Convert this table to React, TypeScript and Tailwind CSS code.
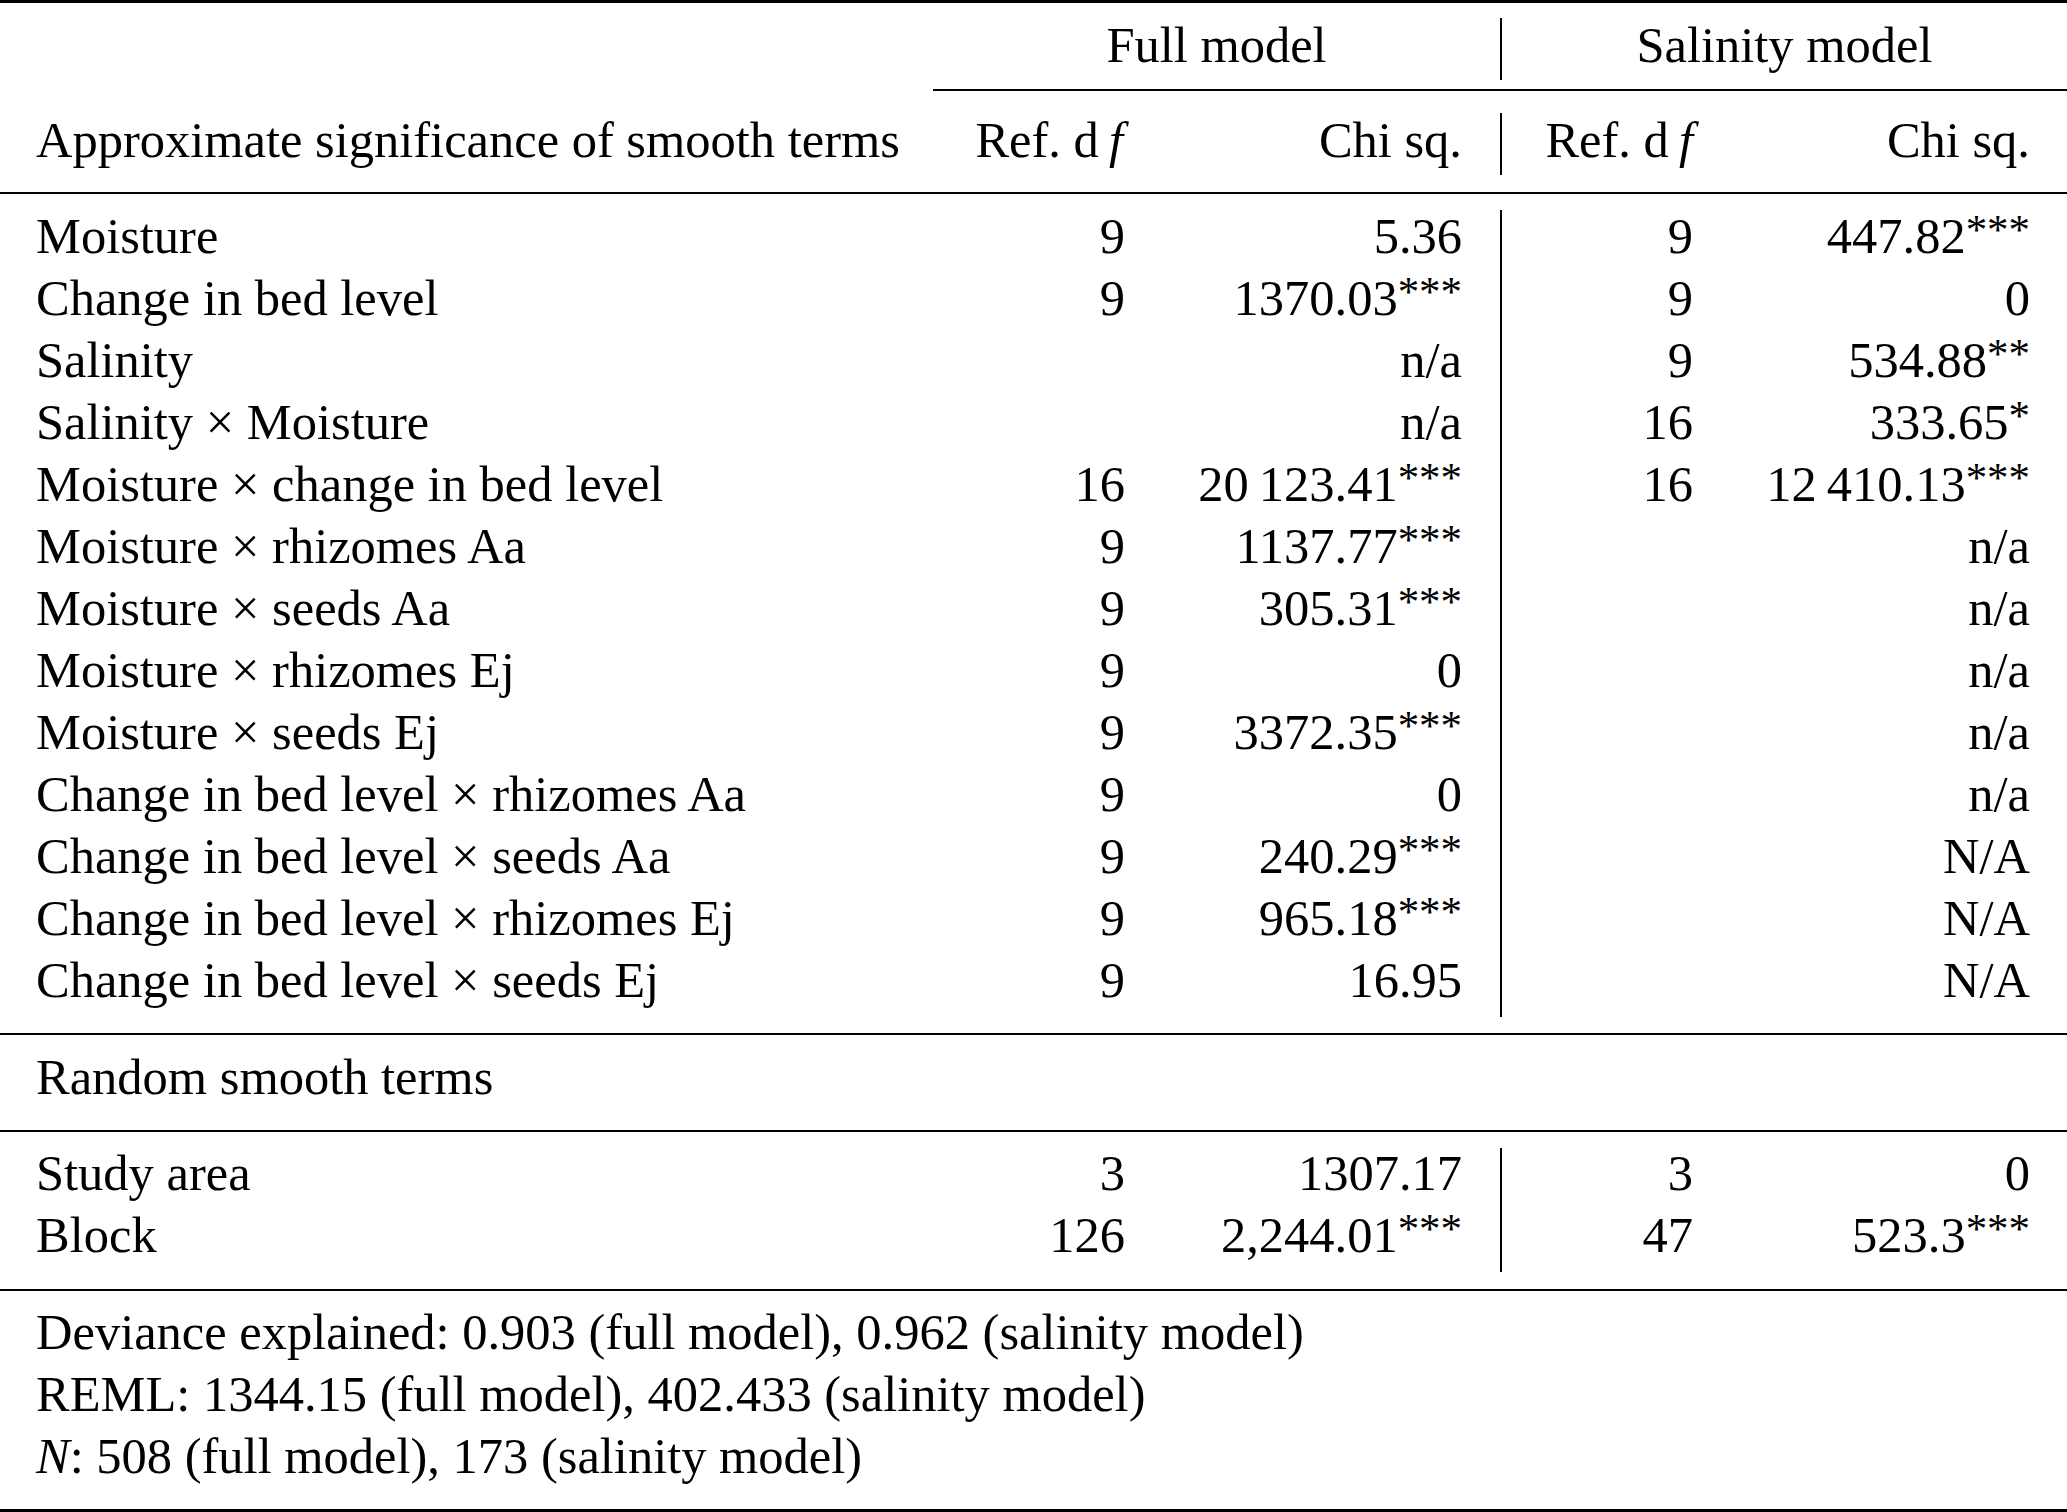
import React from 'react';

type Row = {
  label: string;
  df1: string;
  chi1: string;
  df2: string;
  chi2: string;
};

const smoothRows: Row[] = [
  { label: 'Moisture', df1: '9', chi1: '5.36', df2: '9', chi2: '447.82***' },
  { label: 'Change in bed level', df1: '9', chi1: '1370.03***', df2: '9', chi2: '0' },
  { label: 'Salinity', df1: '', chi1: 'n/a', df2: '9', chi2: '534.88**' },
  { label: 'Salinity × Moisture', df1: '', chi1: 'n/a', df2: '16', chi2: '333.65*' },
  { label: 'Moisture × change in bed level', df1: '16', chi1: '20\u2009123.41***', df2: '16', chi2: '12\u2009410.13***' },
  { label: 'Moisture × rhizomes Aa', df1: '9', chi1: '1137.77***', df2: '', chi2: 'n/a' },
  { label: 'Moisture × seeds Aa', df1: '9', chi1: '305.31***', df2: '', chi2: 'n/a' },
  { label: 'Moisture × rhizomes Ej', df1: '9', chi1: '0', df2: '', chi2: 'n/a' },
  { label: 'Moisture × seeds Ej', df1: '9', chi1: '3372.35***', df2: '', chi2: 'n/a' },
  { label: 'Change in bed level × rhizomes Aa', df1: '9', chi1: '0', df2: '', chi2: 'n/a' },
  { label: 'Change in bed level × seeds Aa', df1: '9', chi1: '240.29***', df2: '', chi2: 'N/A' },
  { label: 'Change in bed level × rhizomes Ej', df1: '9', chi1: '965.18***', df2: '', chi2: 'N/A' },
  { label: 'Change in bed level × seeds Ej', df1: '9', chi1: '16.95', df2: '', chi2: 'N/A' },
];

const randomRows: Row[] = [
  { label: 'Study area', df1: '3', chi1: '1307.17', df2: '3', chi2: '0' },
  { label: 'Block', df1: '126', chi1: '2,244.01***', df2: '47', chi2: '523.3***' },
];

// value with trailing significance stars set as superscript
const Chi = ({ v }: { v: string }) => {
  const m = v.match(/^(.*?)(\**)$/);
  const num = m ? m[1] : v;
  const stars = m ? m[2] : '';
  return (
    <>
      {num}
      {stars && <span className="relative top-[-9px] text-[0.85em] leading-none">{stars}</span>}
    </>
  );
};

const Df = () => (
  <>
    Ref. d{'\u2009'}<i>f</i>
  </>
);

const cell = 'h-[62px] leading-[62px] whitespace-nowrap';

const DataBlock = ({ rows, pt, pb, lineMt, lineMb }: { rows: Row[]; pt: string; pb: string; lineMt: string; lineMb: string }) => (
  <div className={`flex ${pt} ${pb}`}>
    <div className="w-[933px] pl-[36px] flex flex-col">
      {rows.map((r) => (
        <div key={r.label} className={cell}>{r.label}</div>
      ))}
    </div>
    <div className="w-[192px] flex flex-col text-right">
      {rows.map((r) => (
        <div key={r.label} className={cell}>{r.df1}</div>
      ))}
    </div>
    <div className="w-[337px] flex flex-col text-right">
      {rows.map((r) => (
        <div key={r.label} className={cell}><Chi v={r.chi1} /></div>
      ))}
    </div>
    <div className="w-[38px]" />
    <div className={`w-[2px] bg-black ${lineMt} ${lineMb}`} />
    <div className="w-[191px] flex flex-col text-right">
      {rows.map((r) => (
        <div key={r.label} className={cell}>{r.df2}</div>
      ))}
    </div>
    <div className="w-[337px] flex flex-col text-right">
      {rows.map((r) => (
        <div key={r.label} className={cell}><Chi v={r.chi2} /></div>
      ))}
    </div>
  </div>
);

export default function App() {
  return (
    <div className="w-[2067px] h-[1512px] bg-white text-black font-['Liberation_Serif',serif] text-[50.5px]">
      <div className="h-[3px] bg-black" />

      {/* group headers */}
      <div className="flex h-[86px]">
        <div className="w-[933px]" />
        <div className="w-[567px] pt-[11px] text-center">
          <div className={cell}>Full model</div>
        </div>
        <div className="w-[2px] bg-black mt-[15px] mb-[9px]" />
        <div className="flex-1 pt-[11px] text-center">
          <div className={cell}>Salinity model</div>
        </div>
      </div>
      <div className="ml-[933px] h-[2px] bg-black" />

      {/* column headers */}
      <div className="flex h-[101px]">
        <div className="w-[933px] pl-[36px] pt-[18px]">
          <div className={cell}>Approximate significance of smooth terms</div>
        </div>
        <div className="w-[192px] pt-[18px] pr-[2px] text-right">
          <div className={cell}><Df /></div>
        </div>
        <div className="w-[337px] pt-[18px] text-right">
          <div className={cell}>Chi sq.</div>
        </div>
        <div className="w-[38px]" />
        <div className="w-[2px] bg-black mt-[22px] mb-[17px]" />
        <div className="w-[191px] pt-[18px] text-right">
          <div className={cell}><Df /></div>
        </div>
        <div className="w-[337px] pt-[18px] text-right">
          <div className={cell}>Chi sq.</div>
        </div>
      </div>
      <div className="h-[2px] bg-black" />

      <DataBlock rows={smoothRows} pt="pt-[11px]" pb="pb-[22px]" lineMt="mt-[5px]" lineMb="-mb-[6px]" />
      <div className="h-[2px] bg-black" />

      <div className="pl-[36px] pt-[11px] pb-[22px]">
        <div className={cell}>Random smooth terms</div>
      </div>
      <div className="h-[2px] bg-black" />

      <DataBlock rows={randomRows} pt="pt-[10px]" pb="pb-[23px]" lineMt="mt-[6px]" lineMb="-mb-[6px]" />
      <div className="h-[2px] bg-black" />

      <div className="pl-[36px] pt-[10px] pb-[22px]">
        <div className={cell}>Deviance explained: 0.903 (full model), 0.962 (salinity model)</div>
        <div className={cell}>REML: 1344.15 (full model), 402.433 (salinity model)</div>
        <div className={cell}><i>N</i>: 508 (full model), 173 (salinity model)</div>
      </div>
      <div className="h-[3px] bg-black" />
    </div>
  );
}
